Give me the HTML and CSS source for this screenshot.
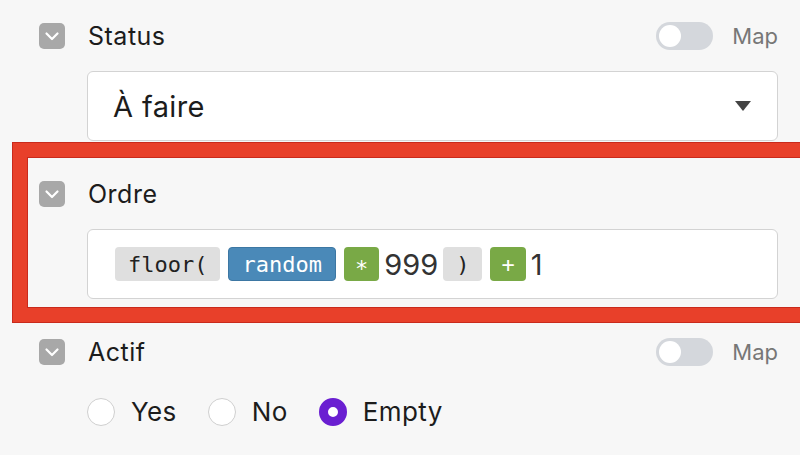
FILE: index.html
```html
<!DOCTYPE html>
<html lang="fr">
<head>
    <meta charset="UTF-8">
    <title>Champs</title>
    <link rel="stylesheet" href="styles.css">
</head>
<body>

<div class="fields">

    <div class="field">
        <div class="field-head">
            <span class="collapse">
                <svg width="16" height="16" viewBox="0 0 16 16"><path d="M2.5 5.5l5.5 5.5 5.5-5.5" fill="none" stroke="#fff" stroke-width="2.2" stroke-linecap="round" stroke-linejoin="round"/></svg>
            </span>
            <span class="field-label">Status</span>
            <div class="map-switch">
                <span class="toggle"><span class="knob"></span></span>
                <span class="map-label">Map</span>
            </div>
        </div>
        <div class="field-body">
            <div class="input select">
                <span>À faire</span>
                <span class="caret"></span>
            </div>
        </div>
    </div>

    <div class="field flagged">
        <div class="field-head">
            <span class="collapse">
                <svg width="16" height="16" viewBox="0 0 16 16"><path d="M2.5 5.5l5.5 5.5 5.5-5.5" fill="none" stroke="#fff" stroke-width="2.2" stroke-linecap="round" stroke-linejoin="round"/></svg>
            </span>
            <span class="field-label">Ordre</span>
        </div>
        <div class="field-body">
            <div class="input formula">
                <span class="token fn">floor(</span>
                <span class="token var">random</span>
                <span class="token op">∗</span>
                <span class="num">999</span>
                <span class="token fn">)</span>
                <span class="token op">+</span>
                <span class="num">1</span>
            </div>
        </div>
    </div>

    <div class="field">
        <div class="field-head">
            <span class="collapse">
                <svg width="16" height="16" viewBox="0 0 16 16"><path d="M2.5 5.5l5.5 5.5 5.5-5.5" fill="none" stroke="#fff" stroke-width="2.2" stroke-linecap="round" stroke-linejoin="round"/></svg>
            </span>
            <span class="field-label">Actif</span>
            <div class="map-switch">
                <span class="toggle"><span class="knob"></span></span>
                <span class="map-label">Map</span>
            </div>
        </div>
        <div class="field-body radios">
            <label class="radio"><span class="dot"></span>Yes</label>
            <label class="radio"><span class="dot"></span>No</label>
            <label class="radio"><span class="dot checked"></span>Empty</label>
        </div>
    </div>

</div>

</body>
</html>
```

FILE: styles.css
```css
html, body {
    overflow: hidden;
}

body {
    margin: 0;
    padding: 0;
    background-color: #f7f7f7;
    font-family: Inter, "Noto Sans", sans-serif;
    color: #1c1c1c;
}

.fields {
    padding: 23px 22px 0 39px;
}

.field {
    position: relative;
}

.field + .field {
    margin-top: 40px;
}

.field.flagged::before {
    content: "";
    position: absolute;
    top: -38px;
    left: -26px;
    right: -40px;
    bottom: -23px;
    border: 14px solid #e8402a;
    box-shadow: inset 0 0 0 1px #c92a1c, 0 0 0 1px #c92a1c;
    pointer-events: none;
}

.field-head {
    display: flex;
    align-items: center;
    height: 26px;
}

.collapse {
    width: 26px;
    height: 26px;
    border-radius: 5px;
    background-color: #a8a8a8;
    display: flex;
    align-items: center;
    justify-content: center;
}

.field-label {
    margin-left: 23px;
    font-size: 25px;
    letter-spacing: 0.5px;
}

.map-switch {
    margin-left: auto;
    display: flex;
    align-items: center;
    gap: 19px;
}

.toggle {
    width: 57px;
    height: 28px;
    border-radius: 14px;
    background-color: #d4d7dc;
    display: flex;
    align-items: center;
    padding-left: 3px;
    box-sizing: border-box;
}

.knob {
    width: 22px;
    height: 22px;
    border-radius: 50%;
    background-color: #fff;
}

.map-label {
    font-size: 22px;
    color: #777;
}

.field-body {
    margin-left: 48px;
    margin-top: 22px;
}

.input {
    height: 70px;
    box-sizing: border-box;
    background-color: #fff;
    border: 1px solid #d3d3d3;
    border-radius: 6px;
    display: flex;
    align-items: center;
}

.select {
    padding: 0 26px 0 25px;
    font-size: 29px;
    letter-spacing: 0.4px;
    justify-content: space-between;
}

.caret {
    width: 0;
    height: 0;
    border-left: 8px solid transparent;
    border-right: 8px solid transparent;
    border-top: 10px solid #444;
}

.formula {
    padding: 0 27px;
    gap: 8px;
}

.token {
    height: 34px;
    padding: 0 13px;
    border-radius: 4px;
    display: flex;
    align-items: center;
    font-family: "DejaVu Sans Mono", monospace;
    font-size: 22px;
}

.token.fn {
    background-color: #dfdfdf;
    color: #222;
}

.token.var {
    background-color: #4a89b8;
    border: 1px solid #3d77a3;
    box-sizing: border-box;
    color: #fff;
}

.token.op {
    background-color: #79a946;
    padding: 0 11px;
    color: #fff;
}

.num {
    font-size: 29px;
    color: #333;
    margin: 0 -3px;
}

.radios {
    margin-top: 31px;
    display: flex;
    align-items: center;
    gap: 31px;
}

.radio {
    display: flex;
    align-items: center;
    gap: 16px;
    font-size: 26px;
    letter-spacing: 0.4px;
}

.dot {
    width: 28px;
    height: 28px;
    box-sizing: border-box;
    border-radius: 50%;
    border: 1.5px solid #cfcfcf;
    background-color: #fff;
}

.dot.checked {
    border: 9px solid #6a1fd1;
}
```
